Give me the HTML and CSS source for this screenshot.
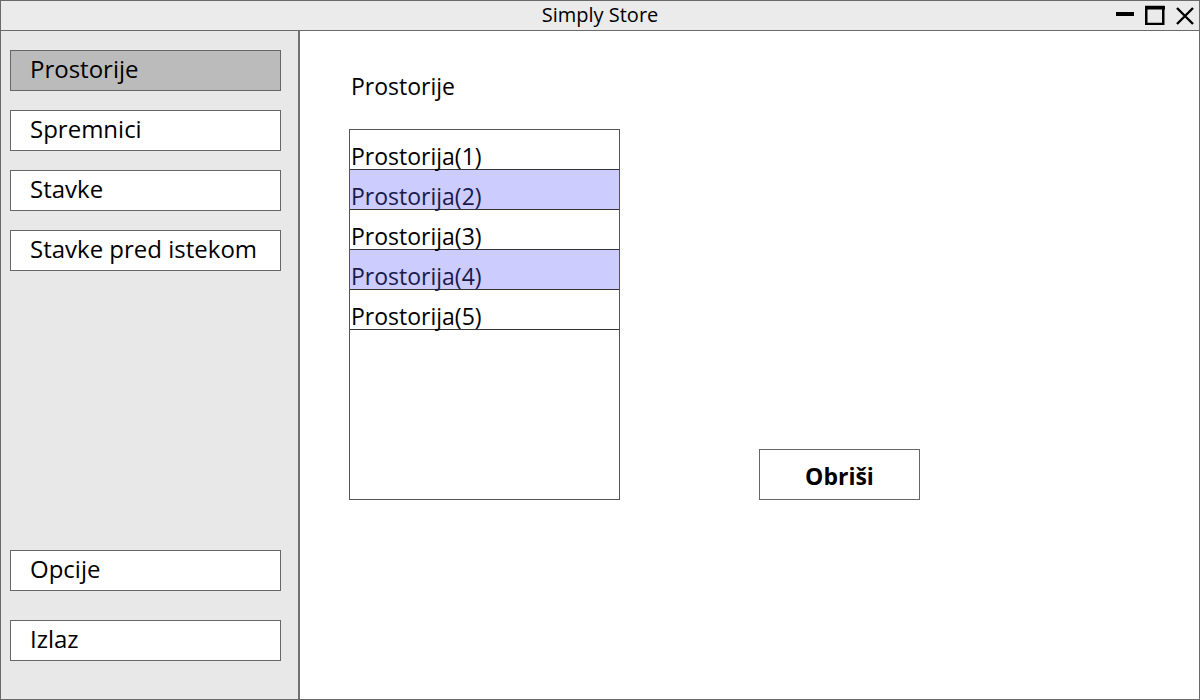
FILE: index.html
```html
<!DOCTYPE html>
<html>
<head>
<meta charset="utf-8">
<title>Simply Store</title>
<link rel="stylesheet" href="styles.css">
</head>
<body>
<div class="window">
  <div class="titlebar">
    <span class="title">Simply Store</span>
    <div class="controls">
      <svg class="ctl" width="20" height="20" viewBox="0 0 20 20"><rect x="1" y="7" width="18" height="4" fill="#000"/></svg>
      <svg class="ctl" width="20" height="20" viewBox="0 0 20 20"><rect x="1.25" y="2" width="17" height="17" fill="none" stroke="#000" stroke-width="2.5"/><rect x="0" y="1" width="20" height="3.5" fill="#000"/></svg>
      <svg class="ctl" width="20" height="20" viewBox="0 0 20 20"><path d="M2 3 L18 19 M18 3 L2 19" stroke="#000" stroke-width="2.4" fill="none"/></svg>
    </div>
  </div>
  <div class="body">
    <nav class="sidebar">
      <div class="group">
        <div class="nav-btn active">Prostorije</div>
        <div class="nav-btn">Spremnici</div>
        <div class="nav-btn">Stavke</div>
        <div class="nav-btn">Stavke pred istekom</div>
      </div>
      <div class="group bottom">
        <div class="nav-btn">Opcije</div>
        <div class="nav-btn">Izlaz</div>
      </div>
    </nav>
    <main class="main">
      <div class="content-row">
        <div class="list-col">
          <div class="label">Prostorije</div>
          <div class="list">
            <div class="row">Prostorija(1)</div>
            <div class="row sel">Prostorija(2)</div>
            <div class="row">Prostorija(3)</div>
            <div class="row sel">Prostorija(4)</div>
            <div class="row">Prostorija(5)</div>
          </div>
        </div>
        <button class="action">Obriši</button>
      </div>
    </main>
  </div>
</div>
</body>
</html>
```
FILE: styles.css
```css
* { box-sizing: border-box; }
html, body { margin: 0; padding: 0; }
body {
  font-family: "Open Sans", "Noto Sans", sans-serif;
  color: #000;
  background: #fff;
}
.window {
  width: 1200px;
  height: 700px;
  border: 1px solid #6a6a6a;
  display: flex;
  flex-direction: column;
  background: #fff;
}
.titlebar {
  height: 30px;
  flex: none;
  border-bottom: 1px solid #6a6a6a;
  background: #ebebeb;
  display: flex;
  align-items: center;
  justify-content: center;
  position: relative;
  font-size: 20px;
  line-height: 26px;
  padding-bottom: 2px;
}
.controls {
  position: absolute;
  right: 4px;
  top: 4px;
  display: flex;
  gap: 10px;
}
.ctl { display: block; }
.body {
  flex: 1;
  display: flex;
  min-height: 0;
}
.sidebar {
  width: 299px;
  flex: none;
  background: #e8e8e8;
  border-right: 2px solid #707070;
  padding: 19px 0 38px 9px;
  display: flex;
  flex-direction: column;
}
.group {
  display: flex;
  flex-direction: column;
  gap: 19px;
}
.group.bottom {
  margin-top: auto;
  gap: 29px;
}
.nav-btn {
  width: 271px;
  height: 41px;
  border: 1px solid #666;
  background: #fff;
  font-size: 24px;
  line-height: 32px;
  padding: 0 0 3px 19px;
  display: flex;
  align-items: center;
}
.nav-btn.active { background: #bbbbbb; }
.main {
  flex: 1;
  padding: 40px 0 0 49px;
}
.content-row {
  display: flex;
  align-items: flex-end;
}
.list-col {
  display: flex;
  flex-direction: column;
}
.label {
  font-size: 23px;
  line-height: 30px;
  margin: 0 0 28px 2px;
}
.list {
  width: 271px;
  height: 371px;
  border: 1px solid #555;
  background: #fff;
}
.row {
  height: 40px;
  font-size: 23px;
  line-height: 26px;
  border-bottom: 1px solid #333;
  display: flex;
  align-items: flex-end;
  padding: 0 0 0 1px;
}
.row.sel {
  background: #ccccff;
  color: #1a1a4a;
}
.action {
  margin-left: 139px;
  width: 161px;
  height: 51px;
  border: 1px solid #666;
  background: #fff;
  font-family: "Open Sans", "Noto Sans", sans-serif;
  font-weight: bold;
  font-size: 23px;
  color: #000;
  padding: 2px 0 0 0;
}
```
